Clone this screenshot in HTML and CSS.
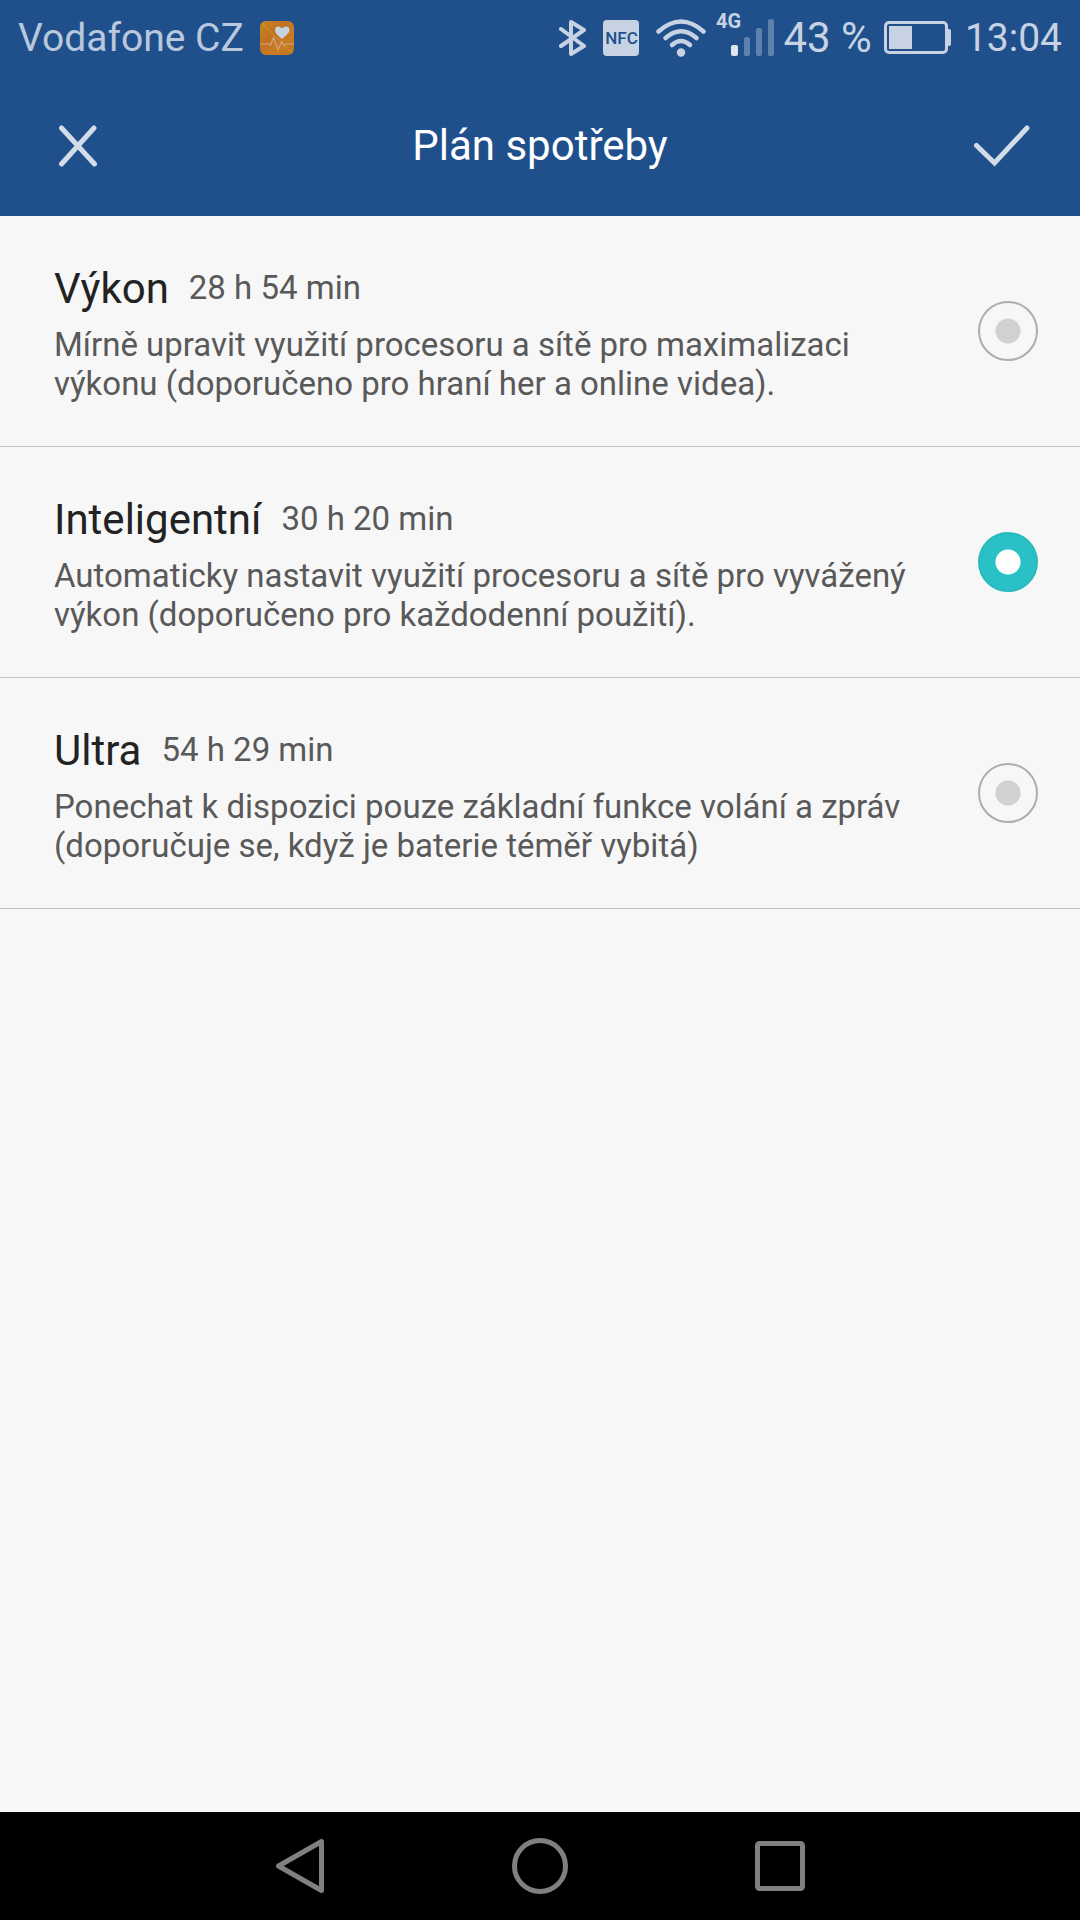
FILE: index.html
```html
<!DOCTYPE html>
<html lang="cs">
<head>
<meta charset="utf-8">
<meta name="viewport" content="width=device-width, initial-scale=1">
<title>Plán spotřeby</title>
<link rel="stylesheet" href="styles.css">
</head>
<body>
<div class="status-bar">
  <div class="status-left">
    <span class="carrier">Vodafone CZ</span>
    <svg class="health-icon" width="34" height="34" viewBox="0 0 34 34" aria-hidden="true">
      <defs>
        <linearGradient id="amber" x1="0" y1="0" x2="1" y2="1">
          <stop offset="0" stop-color="#c98a22"/>
          <stop offset="0.35" stop-color="#c07222"/>
          <stop offset="0.7" stop-color="#cc7b22"/>
          <stop offset="1" stop-color="#bb7420"/>
        </linearGradient>
      </defs>
      <rect width="34" height="34" rx="6" fill="url(#amber)"/>
      <path d="M2 2 32 32" stroke="#cf9a1e" stroke-width="1"/>
      <path d="M0 23h9l1.500 1 3-7.500 4.500 12 4-8 2 4 1.500-1.500H34" fill="none" stroke="#cfa486" stroke-width="1.200"/>
      <path d="M22 18C18 14.500 15 12 15 9c0-4.500 5-4.500 7-1.500 2-3 7.500-3 7.500 1.500 0 3-3.500 5.500-7.500 9z" fill="#c5d2e2"/>
    </svg>
  </div>
  <div class="status-right">
    <svg class="bluetooth" width="28" height="40" viewBox="0 0 28 40" role="img" aria-label="Bluetooth">
      <path d="M2 11 25 28 12 36V4l13 8L2 28" fill="none" stroke="#c7d3e3" stroke-width="4" stroke-linejoin="round" stroke-linecap="round"/>
    </svg>
    <span class="nfc">NFC</span>
    <svg class="wifi" width="50" height="38" viewBox="0 0 50 38" role="img" aria-label="Wi-Fi">
      <g fill="none" stroke="#c7d3e3" stroke-width="4.500" stroke-linecap="round">
        <path d="M2.500 12.500Q25-7.500 47.500 12.500"/>
        <path d="M9.500 19Q25 5.500 40.500 19"/>
        <path d="M16 26Q25 18 34 26"/>
      </g>
      <circle cx="25" cy="33.500" r="4.200" fill="#c7d3e3"/>
    </svg>
    <svg class="signal" width="60" height="58" viewBox="0 -4 60 58" role="img" aria-label="Signál 4G">
      <text class="network" x="1" y="15">4G</text>
      <rect x="16" y="32" width="7" height="11" rx="2" fill="#dde5ee"/>
      <g fill="#5f81ae">
        <rect x="29" y="24" width="6" height="19" rx="2"/>
        <rect x="41" y="15" width="6" height="28" rx="2"/>
        <rect x="53" y="6" width="6" height="37" rx="2"/>
      </g>
    </svg>
    <span class="percent">43 %</span>
    <svg class="battery" width="67" height="34" viewBox="0 0 67 34" role="img" aria-label="Baterie">
      <rect x="1.500" y="1.500" width="61" height="30" rx="3.500" fill="none" stroke="#c7d3e3" stroke-width="3"/>
      <rect x="5" y="5" width="23" height="23" fill="#c7d3e3"/>
      <path d="M63 8h2q2 0 2 2v13q0 2-2 2h-2z" fill="#c7d3e3"/>
    </svg>
    <time class="clock">13:04</time>
  </div>
</div>

<form class="screen">
  <header class="app-bar">
    <button class="icon-button" type="button" aria-label="Zavřít">
      <svg width="38" height="42" viewBox="0 0 38 42"><path d="M2.500 3 35.500 39M35 3 2.500 39" fill="none" stroke="#d3dce8" stroke-width="5" stroke-linecap="round"/></svg>
    </button>
    <h1 class="app-title">Plán spotřeby</h1>
    <button class="icon-button" type="submit" aria-label="Potvrdit">
      <svg width="56" height="42" viewBox="0 0 56 42"><path d="M2.500 20.500 20.500 38 53 3" fill="none" stroke="#d3dce8" stroke-width="5" stroke-linecap="round"/></svg>
    </button>
  </header>

  <main class="plans">
    <label class="plan">
      <span class="plan-text">
        <span class="plan-heading"><span class="plan-name">Výkon</span><span class="plan-time">28 h 54 min</span></span>
        <span class="plan-description">Mírně upravit využití procesoru a sítě pro maximalizaci výkonu (doporučeno pro hraní her a online videa).</span>
      </span>
      <input class="plan-radio" type="radio" name="plan" value="performance">
    </label>
    <label class="plan">
      <span class="plan-text">
        <span class="plan-heading"><span class="plan-name">Inteligentní</span><span class="plan-time">30 h 20 min</span></span>
        <span class="plan-description">Automaticky nastavit využití procesoru a sítě pro vyvážený výkon (doporučeno pro každodenní použití).</span>
      </span>
      <input class="plan-radio" type="radio" name="plan" value="smart" checked>
    </label>
    <label class="plan">
      <span class="plan-text">
        <span class="plan-heading"><span class="plan-name">Ultra</span><span class="plan-time">54 h 29 min</span></span>
        <span class="plan-description">Ponechat k dispozici pouze základní funkce volání a zpráv (doporučuje se, když je baterie téměř vybitá)</span>
      </span>
      <input class="plan-radio" type="radio" name="plan" value="ultra">
    </label>
  </main>
</form>

<nav class="nav-bar">
  <button class="nav-button" type="button" aria-label="Zpět">
    <svg width="56" height="58" viewBox="0 0 56 58"><path d="M49.500 4.500V53.500L6.500 29z" fill="none" stroke="#808080" stroke-width="5" stroke-linejoin="round"/></svg>
  </button>
  <button class="nav-button" type="button" aria-label="Domů">
    <svg width="56" height="58" viewBox="0 0 56 58"><circle cx="28" cy="29" r="25.500" fill="none" stroke="#808080" stroke-width="5"/></svg>
  </button>
  <button class="nav-button" type="button" aria-label="Poslední aplikace">
    <svg width="56" height="58" viewBox="0 0 56 58"><rect x="5.500" y="6.500" width="45" height="45" rx="2" fill="none" stroke="#808080" stroke-width="5"/></svg>
  </button>
</nav>
</body>
</html>
```
FILE: styles.css
```css
* {
  box-sizing: border-box;
}

body {
  margin: 0;
  min-height: 100vh;
  display: flex;
  flex-direction: column;
  background: #f7f7f7;
  color: #222;
  font-family: Roboto, "Noto Sans", sans-serif;
}

svg {
  display: block;
  flex: none;
}

button {
  border: 0;
  padding: 0;
  background: none;
}

.status-bar {
  display: flex;
  justify-content: space-between;
  align-items: center;
  height: 75px;
  padding: 0 18px;
  background: #1f508c;
  color: #c7d3e3;
  font-size: 39px;
  white-space: nowrap;
}

.status-left,
.status-right {
  display: flex;
  align-items: center;
}

.status-left {
  gap: 16px;
}

.carrier {
  color: #b9c8dd;
}

.nfc {
  width: 36px;
  margin: 0 17px 0 16px;
  border-radius: 4px;
  background: #c7d3e3;
  color: #1f508c;
  font-size: 17px;
  font-weight: 500;
  line-height: 36px;
  text-align: center;
}

.signal {
  margin: 0 8px 0 9px;
}

.network {
  fill: #c7d3e3;
  font-size: 20px;
  font-weight: 700;
}

.percent {
  font-size: 42px;
}

.battery {
  margin: 0 14px 0 12px;
}

.screen {
  flex: 1;
}

.app-bar {
  display: flex;
  justify-content: space-between;
  align-items: center;
  height: 141px;
  padding: 0 50px;
  background: #1f508c;
}

.icon-button {
  width: 56px;
  height: 56px;
  display: grid;
  place-items: center;
}

.app-title {
  margin: 0;
  color: #fff;
  font-size: 42px;
  font-weight: 400;
  line-height: 50px;
}

.plan {
  display: flex;
  align-items: center;
  justify-content: space-between;
  gap: 24px;
  padding: 43px 42px 43px 54px;
  border-bottom: 1px solid #c4c4c4;
}

.plan-text {
  display: flex;
  flex-direction: column;
  gap: 10px;
  max-width: 870px;
  padding-top: 4px;
}

.plan-heading {
  display: flex;
  align-items: flex-start;
  gap: 20px;
}

.plan-name {
  font-size: 42px;
  line-height: 52px;
}

.plan-time,
.plan-description {
  color: #595959;
  font-size: 33px;
  line-height: 39px;
}

.plan-time {
  line-height: 50px;
}

.plan-radio {
  appearance: none;
  flex: none;
  width: 60px;
  height: 60px;
  margin: 0;
  border: 2px solid #adadad;
  border-radius: 50%;
  background: radial-gradient(circle, #d1d1d1 12px, transparent 13px);
}

.plan-radio:checked {
  border-color: #2bb9be;
  background: radial-gradient(circle, #fff 12px, #29c1c6 13px);
}

.nav-bar {
  display: flex;
  justify-content: center;
  height: 108px;
  background: #000;
}

.nav-button {
  width: 240px;
  display: grid;
  place-items: center;
}
```
